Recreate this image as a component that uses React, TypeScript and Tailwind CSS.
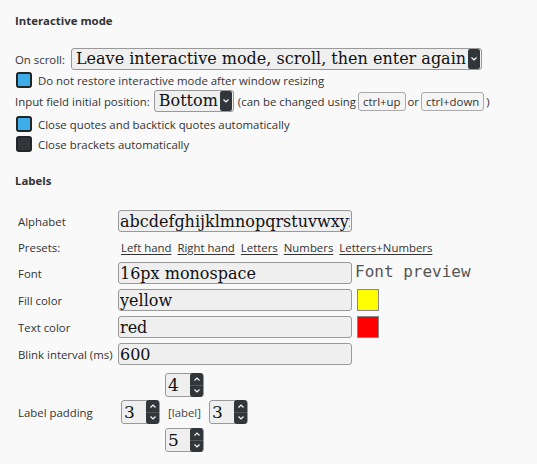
import React from "react";

const serif = "font-['DejaVu_Serif',serif] text-[16px] text-[#111]";

function Arrow() {
  return (
    <span className="flex h-[20px] w-[12px] items-center justify-center rounded-[2px] bg-[#31363b]">
      <svg width="6" height="4" viewBox="0 0 6 4"><path d="M0.5 0.5 L3 3 L5.5 0.5" stroke="#fff" strokeWidth="1.2" fill="none" /></svg>
    </span>
  );
}

function FakeSelect({ value }: { value: string }) {
  return (
    <div className="flex h-[22px] items-center rounded-[3px] border border-[#999] bg-[#efefef] pl-[4px] pr-[1px]">
      <span className={`${serif} leading-none pr-[2px]`}>{value}</span>
      <Arrow />
    </div>
  );
}

function Check({ on }: { on: boolean }) {
  return (
    <span
      className={`inline-block h-[16px] w-[16px] shrink-0 rounded-[3px] border-2 border-[#232629] ${on ? "bg-[#3daee9]" : "bg-[#31363b]"}`}
    />
  );
}

function Kbd({ children }: { children: React.ReactNode }) {
  return (
    <span className="mx-[2px] inline-flex h-[19px] items-center rounded-[3px] border border-[#aaa] bg-[#f5f5f5] px-[4px]">{children}</span>
  );
}

function TextInput({ value }: { value: string }) {
  return (
    <input
      readOnly
      value={value}
      className={`h-[22px] w-[234px] rounded-[3px] border border-[#999] bg-[#efefef] px-[1px] outline-none ${serif}`}
    />
  );
}

function Spin({ value }: { value: number }) {
  return (
    <div className="flex h-[24px] w-[39px] items-center justify-between rounded-[3px] border border-[#999] bg-[#efefef] pl-[2px]">
      <span className={`${serif} text-[17px] leading-none`}>{value}</span>
      <div className="flex h-[24px] w-[13px] flex-col overflow-hidden rounded-[3px] bg-[#31363b]">
        <div className="flex flex-1 items-center justify-center border-b border-[#555]">
          <svg width="6" height="4" viewBox="0 0 6 4"><path d="M0.5 3.5 L3 1 L5.5 3.5" stroke="#fff" strokeWidth="1.1" fill="none" /></svg>
        </div>
        <div className="flex flex-1 items-center justify-center">
          <svg width="6" height="4" viewBox="0 0 6 4"><path d="M0.5 0.5 L3 3 L5.5 0.5" stroke="#fff" strokeWidth="1.1" fill="none" /></svg>
        </div>
      </div>
    </div>
  );
}

function Swatch({ color }: { color: string }) {
  return <span className={`ml-[5px] inline-block h-[22px] w-[22px] border border-[#888] ${color}`} />;
}

export default function App() {
  const presets = ["Left hand", "Right hand", "Letters", "Numbers", "Letters+Numbers"];

  return (
    <div className="min-h-screen bg-[#f9f9f9] px-[15px] pt-[13px] font-['Open_Sans',sans-serif] text-[11.4px] leading-[15px] text-[#333]">
      <div className="font-bold">Interactive mode</div>

      <div className="mt-[20px] flex h-[22px] items-center gap-[6px]">
        <span>On scroll:</span>
        <FakeSelect value="Leave interactive mode, scroll, then enter again" />
      </div>
      <div className="flex h-[20px] items-center gap-[6px] pl-[1px]">
        <Check on />
        <span>Do not restore interactive mode after window resizing</span>
      </div>
      <div className="flex h-[22px] items-center">
        <span className="mr-[4px]">Input field initial position:</span>
        <FakeSelect value="Bottom" />
        <span className="ml-[4px]">(can be changed using</span>
        <Kbd>ctrl+up</Kbd>
        <span>or</span>
        <Kbd>ctrl+down</Kbd>
        <span>)</span>
      </div>
      <div className="mt-[1px] flex h-[22px] items-center gap-[6px] pl-[1px]">
        <Check on />
        <span>Close quotes and backtick quotes automatically</span>
      </div>
      <div className="flex h-[18px] items-center gap-[6px] pl-[1px]">
        <Check on={false} />
        <span>Close brackets automatically</span>
      </div>

      <div className="mt-[20px] font-bold">Labels</div>

      <div className="mt-[22px] grid grid-cols-[100px_auto] pl-[3px]">
        <div className="flex h-[22px] items-center">Alphabet</div>
        <TextInput value="abcdefghijklmnopqrstuvwxyz" />

        <div className="flex h-[30px] items-center">Presets:</div>
        <div className="flex h-[30px] items-center gap-[6px] pl-[3px]">
          {presets.map((p) => (
            <a key={p} href="#" className="underline underline-offset-2">{p}</a>
          ))}
        </div>

        <div className="flex h-[22px] items-center">Font</div>
        <div className="flex h-[22px] items-center">
          <TextInput value="16px monospace" />
          <span className="ml-[3px] -mt-[4px] font-['DejaVu_Sans_Mono',monospace] text-[16px] text-[#555]">Font preview</span>
        </div>

        <div className="mt-[5px] flex h-[22px] items-center">Fill color</div>
        <div className="mt-[5px] flex h-[22px] items-center">
          <TextInput value="yellow" />
          <Swatch color="bg-[#ffff00]" />
        </div>

        <div className="mt-[5px] flex h-[22px] items-center">Text color</div>
        <div className="mt-[5px] flex h-[22px] items-center">
          <TextInput value="red" />
          <Swatch color="bg-[#ff0000]" />
        </div>

        <div className="mt-[5px] flex h-[22px] items-center whitespace-nowrap">Blink interval (ms)</div>
        <div className="mt-[5px]">
          <TextInput value="600" />
        </div>

        <div className="mt-[8px] flex items-center">Label padding</div>
        <div className="mt-[8px] ml-[3px] grid grid-cols-[39px_39px_39px] grid-rows-[24px_25px_24px] gap-x-[5px] gap-y-[3px]">
          <div />
          <Spin value={4} />
          <div />
          <Spin value={3} />
          <div className="flex items-center justify-center text-[#444]">[label]</div>
          <Spin value={3} />
          <div />
          <Spin value={5} />
          <div />
        </div>
      </div>
    </div>
  );
}
